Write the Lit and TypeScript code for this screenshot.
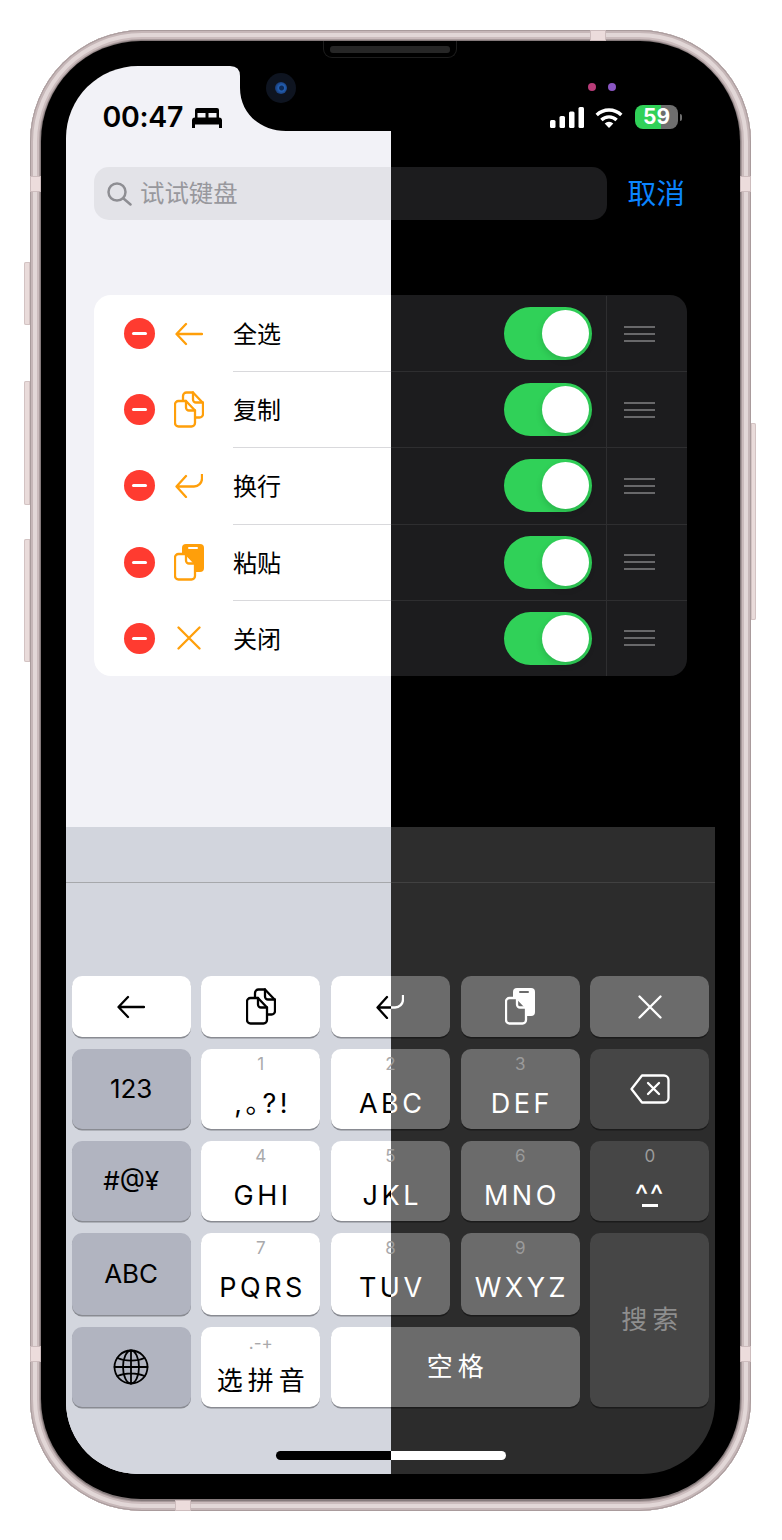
import { LitElement, html, css, svg } from "lit";
import { customElement } from "lit/decorators.js";

const icons = {
  back: html`<svg class="ic" width="28" height="24" viewBox="0 0 28 24"><path d="M11 2 1.500 12 11 22M2 12H27"/></svg>`,
  copy: html`<svg class="ic" width="30" height="37" viewBox="0 0 30 37"><path d="M9 9.500V5a3.500 3.500 0 0 1 3.500-3.500H19L29 12v11a3.500 3.500 0 0 1-3.500 3.500H21"/><path d="M19 1.500V8.500a3 3 0 0 0 3 3h7"/><path class="doc" d="M4.500 10H12l9 9.500V32a3.500 3.500 0 0 1-3.500 3.500H4.500A3.500 3.500 0 0 1 1 32V13.500A3.500 3.500 0 0 1 4.500 10Z"/><path d="M12 10v6.500a3 3 0 0 0 3 3h6"/></svg>`,
  ret: html`<svg class="ic" width="28" height="24" viewBox="0 0 28 24"><path d="M11 2 1.500 12.500 11 23M2 12.500H19a8 8 0 0 0 8-8V.5"/></svg>`,
  paste: html`<svg class="ic" width="30" height="37" viewBox="0 0 30 37"><rect class="solid" x="8" y="0" width="22" height="28" rx="4"/><rect class="notch" x="14" y="3" width="10" height="2" rx="1"/><path class="doc" d="M4.500 10H12l9 9.500V32a3.500 3.500 0 0 1-3.500 3.500H4.500A3.500 3.500 0 0 1 1 32V13.500A3.500 3.500 0 0 1 4.500 10Z"/><path d="M12 10v6.500a3 3 0 0 0 3 3h6"/></svg>`,
  close: html`<svg class="ic" width="24" height="24" viewBox="0 0 24 24"><path d="M1.500 1.500 22.500 22.500M22.500 1.500 1.500 22.500"/></svg>`,
};

const backspace = html`<svg class="ic" width="40" height="30" viewBox="0 0 40 30"><path d="M12 1.500H34a4.500 4.500 0 0 1 4.500 4.500V24a4.500 4.500 0 0 1-4.500 4.500H12L1.500 15Z"/><path d="M18 9 29 20M29 9 18 20"/></svg>`;
const globe = html`<svg class="ic globe" width="36" height="36" viewBox="0 0 36 36"><circle cx="18" cy="18" r="16.500"/><ellipse cx="18" cy="18" rx="8" ry="16.500"/><path d="M18 1.500V34.500M1.500 18H34.500M4.500 9C12 12.500 24 12.500 31.500 9M4.500 27C12 23.500 24 23.500 31.500 27"/></svg>`;
const bed = html`<svg class="fillicon" width="30" height="20" viewBox="0 0 30 20"><path fill-rule="evenodd" d="M5 0H25a2 2 0 0 1 2 2V9.500a3 3 0 0 1 3 3V20H27V16.500H3V20H0V12.500a3 3 0 0 1 3-3V2A2 2 0 0 1 5 0ZM5.500 5V9.500H13.500V5ZM16.500 5V9.500H24.500V5Z"/></svg>`;
const signal = html`<svg class="fillicon" width="34" height="21" viewBox="0 0 34 21"><rect x="0" y="13" width="5.500" height="8" rx="1.500"/><rect x="9.500" y="9" width="5.500" height="12" rx="1.500"/><rect x="19" y="4.500" width="5.500" height="16.500" rx="1.500"/><rect x="28.500" y="0" width="5.500" height="21" rx="1.500"/></svg>`;
const wifi = html`<svg class="fillicon wifi" width="28" height="21" viewBox="0 0 28 21">
  ${svg`<path class="arc" d="M1.700 8A17.500 17.500 0 0 1 26.300 8"/><path class="arc" d="M6.400 13A10.800 10.800 0 0 1 21.600 13"/><path d="M14 21 9.700 16.500A6 6 0 0 1 18.300 16.500Z"/>`}
</svg>`;
const searchIcon = html`<svg class="search-ic" width="25" height="24" viewBox="0 0 25 24"><circle cx="10" cy="10" r="8.500"/><path d="M16.500 16.500 23.500 22.500"/></svg>`;

const rows: [string, keyof typeof icons][] = [
  ["全选", "back"],
  ["复制", "copy"],
  ["换行", "ret"],
  ["粘贴", "paste"],
  ["关闭", "close"],
];

@customElement("app-root")
export class AppRoot extends LitElement {
  static styles = css`
    :host {
      display: block;
      width: 782px;
      height: 1540px;
      background: #fff;
      overflow: hidden;
      font-family: "Inter", "Noto Sans CJK SC", sans-serif;
    }
    .page { padding: 30px 0 0 30px; }
    .frame {
      position: relative;
      width: 721px;
      height: 1481px;
      box-sizing: border-box;
      padding: 11px 11px 12px;
      border-radius: 112px;
      background: #857a7b;
      box-shadow:
        inset 0 0 0 1px #a99b9c,
        inset 0 0 0 3px #c6b7b8,
        inset 0 0 0 7px #e2d7d7,
        inset 0 0 0 9px #cbbcbd,
        inset 0 0 0 10px #a89a9b;
    }
    .band { position: absolute; background: #ecdcdc; box-shadow: inset 0 0 0 1px #cdbcbd; }
    .b-top { left: 560px; top: 0; width: 16px; height: 11px; }
    .b-bot { left: 145px; bottom: 0; width: 16px; height: 11px; }
    .b-l1 { left: 0; top: 146px; width: 11px; height: 16px; }
    .b-r1 { right: 0; top: 146px; width: 11px; height: 16px; }
    .b-l2 { left: 0; top: 1316px; width: 11px; height: 16px; }
    .b-r2 { right: 0; top: 1316px; width: 11px; height: 16px; }
    .btn { position: absolute; background: #e9dbda; box-shadow: inset 0 0 0 1px #d3c3c3; }
    .btn.l { left: -6px; width: 6px; border-radius: 2px 0 0 2px; }
    .btn.r { right: -5px; width: 5px; border-radius: 0 2px 2px 0; }
    .bezel {
      position: relative;
      height: 100%;
      box-sizing: border-box;
      padding: 25px 25px 24px;
      border-radius: 100px;
      background: #000;
    }
    .speaker {
      position: absolute;
      left: 282px;
      top: 0;
      width: 134px;
      height: 17px;
      box-sizing: border-box;
      padding: 5px 6px 4px;
      border: 1px solid #1d1d1d;
      border-top: 0;
      border-radius: 0 0 9px 9px;
    }
    .grill { height: 7px; border-radius: 3px; background: #262626; }
    .screen {
      position: relative;
      width: 649px;
      height: 1408px;
      border-radius: 72px;
      overflow: hidden;
    }
    .layer {
      --bg: #f2f2f7; --text: #000; --sep: #d9d9dc; --card: #fff; --search: #e3e3e8;
      --key: #fff; --fn: #b1b4c0; --kb: #d3d6de; --kb-top: #d2d5dd; --kb-line: #a6a8ab;
      --shadow: #898b92; --digit: #a9a9ab; --dim: #8e8e90;
      display: flex;
      flex-direction: column;
      width: 649px;
      height: 1408px;
      background: var(--bg);
      color: var(--text);
      clip-path: inset(0 324px 0 0);
    }
    .layer.dark {
      --bg: #000; --text: #fff; --sep: #2e2e30; --card: #1c1c1e; --search: #1c1c1e;
      --key: #6b6b6b; --fn: #464646; --kb: #2c2c2c; --kb-top: #2d2d2d; --kb-line: #414141;
      --shadow: #1b1b1b; --digit: #9b9b9b; --dim: #8e8e8e;
      position: absolute;
      inset: 0;
      clip-path: inset(0 0 0 325px);
    }
    .notch { position: absolute; left: 0; top: 0; }
    .status {
      display: flex;
      align-items: center;
      height: 101px;
      box-sizing: border-box;
      padding: 37px 0 36px 36.500px;
    }
    .time { font-size: 28.500px; font-weight: 600; line-height: 28px; letter-spacing: -.3px; }
    .fillicon { fill: var(--text); flex: none; }
    .status .bed { margin: 1px 0 0 9px; display: flex; }
    .arc { fill: none; stroke: var(--text); stroke-width: 3.4; stroke-linecap: butt; }
    .wifi { margin-right: 1px; }
    .right {
      display: flex;
      align-items: center;
      gap: 11px;
      margin-left: auto;
      margin-right: 33px;
    }
    .battery {
      display: flex;
      width: 43px;
      height: 24px;
      border-radius: 8px;
      margin: -1px 0 0 0;
      justify-content: center;
      align-items: center;
      font-size: 21px;
      font-weight: 700;
      color: #fff;
      background: linear-gradient(90deg, #30d158 0 26px, #6e6e6e 26px);
    }
    .nub { width: 2.500px; height: 7px; background: #6e6e6e; border-radius: 0 3px 3px 0; margin-left: -9.500px; }
    .search-row {
      display: flex;
      align-items: center;
      gap: 20.500px;
      padding-left: 28px;
      margin-bottom: 75px;
    }
    .search {
      display: flex;
      align-items: center;
      gap: 9px;
      width: 513px;
      height: 53px;
      box-sizing: border-box;
      padding-left: 13px;
      border-radius: 15px;
      background: var(--search);
      color: #98989d;
      font-size: 24.400px;
    }
    .search span { margin: 0 0 4px -1px; }
    .search-ic { fill: none; stroke: #8e8e93; stroke-width: 2.500; stroke-linecap: round; }
    .cancel { color: #0a84ff; font-size: 28.800px; line-height: 53px; }
    .list {
      display: grid;
      grid-auto-rows: 76.200px;
      margin-left: 28px;
      width: 593px;
      border-radius: 17px;
      background: var(--card);
      overflow: hidden;
    }
    .row { display: flex; align-items: stretch; padding-left: 30px; }
    .minus {
      display: flex;
      align-self: center;
      align-items: center;
      justify-content: center;
      width: 31px;
      height: 31px;
      border-radius: 50%;
      background: #ff3b30;
      margin-top: 1px;
    }
    .minus i { display: block; width: 15px; height: 3px; border-radius: 1.500px; background: #fff; }
    .row-ic {
      display: flex;
      align-self: center;
      justify-content: center;
      width: 34px;
      margin: 1px 27px 0 17px;
      color: #ff9f0a;
      --doc: var(--card);
      --notch: var(--card);
    }
    .ic { display: block; fill: none; stroke: currentColor; stroke-width: 2.300; stroke-linecap: round; stroke-linejoin: round; }
    .ic .doc { fill: var(--doc); stroke: currentColor; }
    .ic .solid { fill: currentColor; stroke: none; }
    .ic .notch { fill: var(--notch); stroke: none; }
    .ic.globe { stroke-width: 1.800; }
    .row-body {
      flex: 1;
      display: flex;
      align-items: center;
      border-top: 1px solid var(--sep);
    }
    .row:first-child .row-body { border-top-color: transparent; }
    .label { font-size: 24px; line-height: 30px; padding-top: 3px; }
    .toggle {
      display: flex;
      justify-content: flex-end;
      align-items: center;
      box-sizing: border-box;
      width: 88px;
      height: 53px;
      padding-right: 3px;
      margin: 0 14px 0 auto;
      border-radius: 27px;
      background: #30d158;
    }
    .thumb {
      width: 47px;
      height: 47px;
      border-radius: 50%;
      background: #fff;
      box-shadow: 0 3px 7px rgba(0, 0, 0, .14);
    }
    .handle {
      align-self: stretch;
      display: flex;
      flex-direction: column;
      justify-content: center;
      gap: 5px;
      width: 81px;
      box-sizing: border-box;
      padding: 0 32px 0 17px;
      border-left: 1px solid var(--sep);
    }
    .handle i { display: block; height: 2px; background: #68686a; }
    .kb {
      margin-top: auto;
      height: 647px;
      background: var(--kb);
    }
    .kb-top {
      height: 55px;
      background: var(--kb-top);
      border-bottom: 1px solid var(--kb-line);
      box-sizing: content-box;
    }
    .keys {
      display: grid;
      grid-template-columns: repeat(5, 1fr);
      grid-template-rows: 61px 80px 80px 82px 80px;
      gap: 12px 10.400px;
      padding: 93px 5.500px 0;
    }
    .key {
      display: flex;
      flex-direction: column;
      align-items: center;
      justify-content: center;
      border-radius: 10px;
      background: var(--key);
      box-shadow: 0 1.500px 0 var(--shadow);
      --doc: var(--key);
      --notch: var(--key);
    }
    .key.fn { background: var(--fn); --doc: var(--fn); --notch: var(--fn); }
    .key.letters { justify-content: flex-start; padding-top: 5px; }
    .digit { font-size: 17px; line-height: 20px; color: var(--digit); }
    .abc { font-size: 27px; line-height: 34px; margin-top: 13px; letter-spacing: 3.500px; margin-right: -3.500px; }
    .tight { font-feature-settings: "halt"; }
    .sym { font-size: 26px; line-height: 32px; }
    .cjk { font-size: 26px; line-height: 36px; letter-spacing: 5px; margin-right: -5px; }
    .pin .digit { font-size: 17px; line-height: 20px; letter-spacing: 0; }
    .pin .cjk { margin-top: 10px; }
    .pin.letters { padding-top: 6px; }
    .caret { font-size: 29px; line-height: 18px; margin-top: 20px; letter-spacing: 1.500px; height: 18px; }
    .mouth { width: 16px; height: 2.500px; background: var(--text); margin-top: 0; }
    .span-col { grid-column: span 2; }
    .span-row { grid-column: 5; grid-row: 4 / span 2; }
    .dim { color: var(--dim); }
    .home {
      width: 230px;
      height: 9px;
      margin: 44px auto 0;
      border-radius: 4.500px;
      background: var(--text);
    }
    .camera {
      position: absolute;
      left: 200px;
      top: 7px;
      display: flex;
      align-items: center;
      justify-content: center;
      width: 30px;
      height: 30px;
      border-radius: 50%;
      background: #0e1420;
    }
    .camera i {
      display: block;
      width: 12px;
      height: 12px;
      border-radius: 50%;
      background: radial-gradient(circle at 55% 50%, #0d2a57 0 2px, #2360b4 3px, #1a3f7c 6px);
    }
    .dot { position: absolute; top: 17px; width: 8px; height: 8px; border-radius: 50%; }
    .dot.a { left: 522px; background: #b83c78; }
    .dot.b { left: 542px; background: #8a56c2; }
  `;

  private digitKey(digit: string, text: unknown) {
    return html`<div class="key letters"><span class="digit">${digit}</span><span class="abc">${text}</span></div>`;
  }

  private layer(dark: boolean) {
    return html`
      <div class="layer ${dark ? "dark" : ""}">
        <div class="status">
          <span class="time">00:47</span>
          <span class="bed">${bed}</span>
          <div class="right">
            ${signal}${wifi}
            <div class="battery">59</div>
            <div class="nub"></div>
          </div>
        </div>
        <div class="search-row">
          <div class="search">${searchIcon}<span>试试键盘</span></div>
          <span class="cancel">取消</span>
        </div>
        <div class="list">
          ${rows.map(
            ([label, icon]) => html`
              <div class="row">
                <div class="minus"><i></i></div>
                <div class="row-ic">${icons[icon]}</div>
                <div class="row-body">
                  <span class="label">${label}</span>
                  <div class="toggle"><div class="thumb"></div></div>
                  <div class="handle"><i></i><i></i><i></i></div>
                </div>
              </div>
            `
          )}
        </div>
        <div class="kb">
          <div class="kb-top"></div>
          <div class="keys">
            <div class="key">${icons.back}</div>
            <div class="key">${icons.copy}</div>
            <div class="key">${icons.ret}</div>
            <div class="key">${icons.paste}</div>
            <div class="key">${icons.close}</div>

            <div class="key fn"><span class="sym">123</span></div>
            ${this.digitKey("1", html`<span class="tight">,。?!</span>`)}
            ${this.digitKey("2", "ABC")}
            ${this.digitKey("3", "DEF")}
            <div class="key fn">${backspace}</div>

            <div class="key fn"><span class="sym">#@¥</span></div>
            ${this.digitKey("4", "GHI")}
            ${this.digitKey("5", "JKL")}
            ${this.digitKey("6", "MNO")}
            <div class="key fn letters">
              <span class="digit">0</span>
              <span class="caret">^^</span>
              <div class="mouth"></div>
            </div>

            <div class="key fn"><span class="sym">ABC</span></div>
            ${this.digitKey("7", "PQRS")}
            ${this.digitKey("8", "TUV")}
            ${this.digitKey("9", "WXYZ")}
            <div class="key fn span-row"><span class="cjk dim">搜索</span></div>

            <div class="key fn">${globe}</div>
            <div class="key letters pin"><span class="digit">.-+</span><span class="cjk">选拼音</span></div>
            <div class="key span-col"><span class="cjk">空格</span></div>
          </div>
          <div class="home"></div>
        </div>
      </div>
    `;
  }

  render() {
    return html`
      <div class="page">
        <div class="frame">
          <div class="btn l" style="top:232px;height:63px"></div>
          <div class="btn l" style="top:351px;height:124px"></div>
          <div class="btn l" style="top:509px;height:123px"></div>
          <div class="btn r" style="top:393px;height:197px"></div>
          <div class="band b-top"></div>
          <div class="band b-bot"></div>
          <div class="band b-l1"></div>
          <div class="band b-r1"></div>
          <div class="band b-l2"></div>
          <div class="band b-r2"></div>
          <div class="bezel">
            <div class="speaker"><div class="grill"></div></div>
            <div class="screen">
              ${this.layer(false)}
              ${this.layer(true)}
              <svg class="notch" width="340" height="66" viewBox="0 0 340 66">
                <path d="M164 0Q174 0 174 10V22C174 47 194 65 220 65H340V0Z" fill="#000" />
              </svg>
              <div class="camera"><i></i></div>
              <div class="dot a"></div>
              <div class="dot b"></div>
            </div>
          </div>
        </div>
      </div>
    `;
  }
}
